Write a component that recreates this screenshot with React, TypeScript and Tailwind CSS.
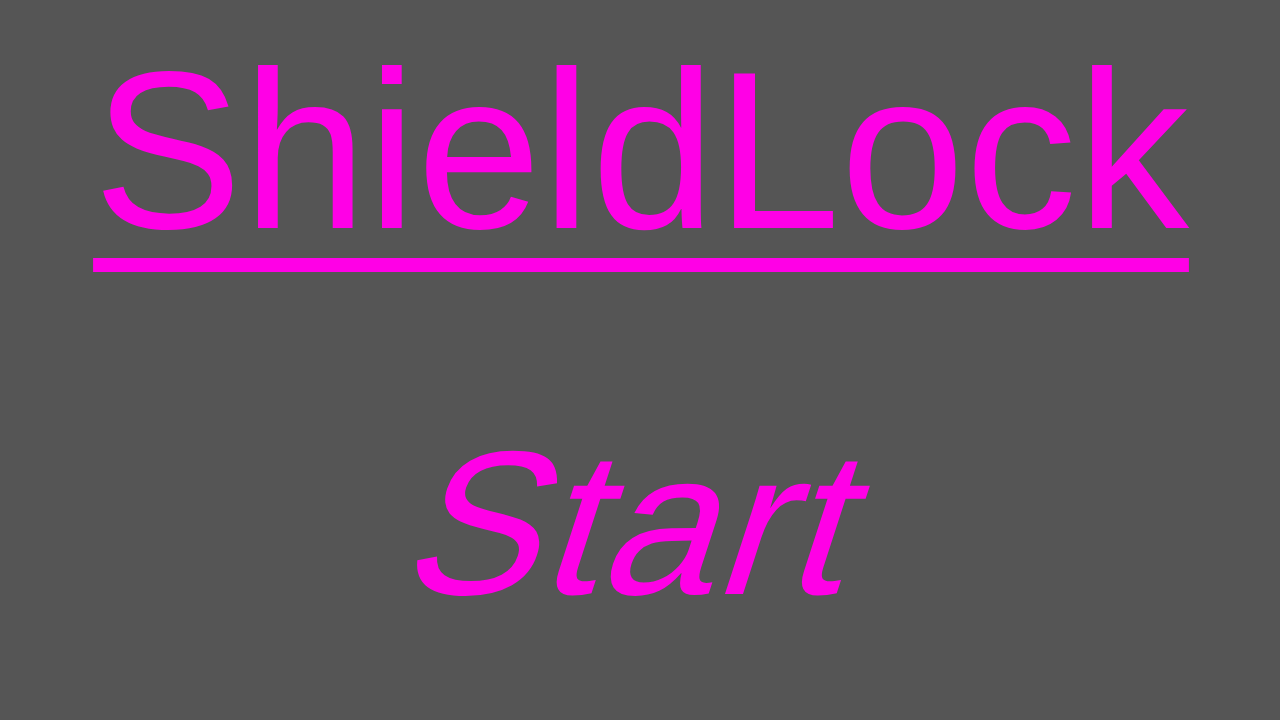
export default function App() {
  return (
    <div
      className="w-[1280px] h-[720px] bg-[#555555] flex flex-col items-center overflow-hidden"
      style={{ fontFamily: '"Liberation Sans", Arial, sans-serif' }}
    >
      <h1 className="mt-[22px] pl-[2px] text-[224px] leading-[normal] font-normal text-[#ff00e6] underline decoration-[14px] underline-offset-[30px] whitespace-nowrap">
        ShieldLock
      </h1>
      <button className="mt-[126px] text-[205px] leading-[normal] text-[#ff00e6] whitespace-nowrap bg-transparent">
        <span className="inline-block -skew-x-[18deg] tracking-[2px] pl-[2px]">Start</span>
      </button>
    </div>
  );
}
